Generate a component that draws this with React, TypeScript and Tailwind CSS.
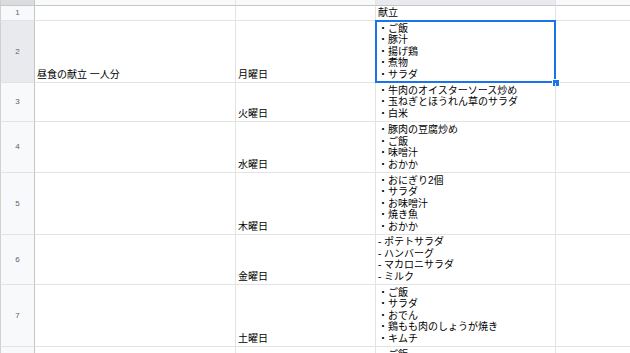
import React from "react";

type Row = { n: number; h: string; a?: string; b?: string; c?: string[]; sel?: boolean };

const rows: Row[] = [
  { n: 1, h: "h-[15px]", c: ["献立"] },
  { n: 2, h: "h-[62px]", a: "昼食の献立 一人分", b: "月曜日", c: ["・ご飯", "・豚汁", "・揚げ鶏", "・煮物", "・サラダ"], sel: true },
  { n: 3, h: "h-[39px]", b: "火曜日", c: ["・牛肉のオイスターソース炒め", "・玉ねぎとほうれん草のサラダ", "・白米"] },
  { n: 4, h: "h-[51px]", b: "水曜日", c: ["・豚肉の豆腐炒め", "・ご飯", "・味噌汁", "・おかか"] },
  { n: 5, h: "h-[62px]", b: "木曜日", c: ["・おにぎり2個", "・サラダ", "・お味噌汁", "・焼き魚", "・おかか"] },
  { n: 6, h: "h-[50px]", b: "金曜日", c: ["- ポテトサラダ", "- ハンバーグ", "- マカロニサラダ", "- ミルク"] },
  { n: 7, h: "h-[62px]", b: "土曜日", c: ["・ご飯", "・サラダ", "・おでん", "・鶏もも肉のしょうが焼き", "・キムチ"] },
  { n: 8, h: "h-[62px]", b: "日曜日", c: ["・ご飯", "・味噌汁", "・焼き魚", "・サラダ", "・果物"] },
];

const cellBase = "flex flex-col justify-end px-[2px] pb-[2px] border-r border-b border-[#e2e3e3] overflow-hidden whitespace-nowrap";

export default function App() {
  return (
    <div
      className="w-[630px] h-[353px] overflow-hidden bg-white text-black text-[10px] leading-[11.5px]"
      style={{ fontFamily: '"Liberation Sans", "Noto Sans CJK JP", sans-serif' }}
    >
      {/* column header strip */}
      <div className="grid grid-cols-[35px_201px_140px_180px_1fr] h-[6px]">
        <div className="bg-[#dadce0] border-r border-b border-[#c4c7c5] border-l border-l-[#d0d0d0]" />
        <div className="bg-[#f8f9fa] border-r border-b border-[#c4c7c5] border-r-[#e2e3e3]" />
        <div className="bg-[#f8f9fa] border-r border-b border-[#c4c7c5] border-r-[#e2e3e3]" />
        <div className="bg-[#e8eaed] border-r border-b border-[#c4c7c5] border-r-[#e2e3e3]" />
        <div className="bg-[#f8f9fa] border-b border-[#c4c7c5]" />
      </div>
      {rows.map((r) => (
        <div key={r.n} className={`grid grid-cols-[35px_201px_140px_180px_1fr] ${r.h}`}>
          <div
            className={`flex items-center justify-center border-l border-l-[#d0d0d0] border-r border-r-[#c4c7c5] border-b border-b-[#e2e3e3] text-[8px] text-[#5f6368] ${
              r.sel ? "bg-[#e8eaed]" : "bg-[#f8f9fa]"
            }`}
          >
            {r.n}
          </div>
          <div className={cellBase}>{r.a && <div>{r.a}</div>}</div>
          <div className={cellBase}>{r.b && <div>{r.b}</div>}</div>
          <div className={`${cellBase} relative overflow-visible`}>
            {r.c?.map((t, i) => (
              <div key={i}>{t}</div>
            ))}
            {r.sel && (
              <>
                <div className="absolute -top-[1px] -left-[1px] -right-[1px] -bottom-[1px] border-2 border-[#1a73e8] pointer-events-none" />
                <div className="absolute -right-[3.5px] -bottom-[3.5px] w-[6px] h-[6px] bg-[#1a73e8] border border-white box-content -mr-[1px] -mb-[1px]" />
              </>
            )}
          </div>
          <div className="border-b border-[#e2e3e3]" />
        </div>
      ))}
    </div>
  );
}
